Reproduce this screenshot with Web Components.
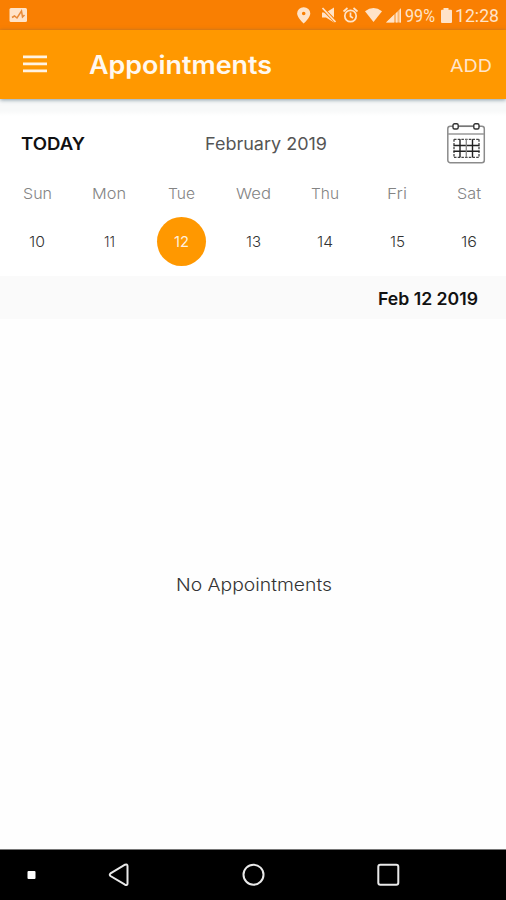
<!DOCTYPE html>
<html lang="en">
<head>
<meta charset="utf-8">
<title>Appointments</title>
<style>
html, body { margin: 0; height: 100%; }
body { font-family: Inter, "Open Sans", sans-serif; background: #fefefe; }
</style>
</head>
<body>
<appointments-screen></appointments-screen>
<script>
const define = (name, html, setup) => {
  const tpl = document.createElement('template');
  tpl.innerHTML = html;
  customElements.define(name, class extends HTMLElement {
    constructor() {
      super();
      this.attachShadow({ mode: 'open' }).appendChild(tpl.content.cloneNode(true));
    }
    connectedCallback() { if (setup) setup(this, this.shadowRoot); }
  });
};

/* One line of text whose letters widen to the given width. */
define('wide-text', `
<style>
:host { display: block; flex: none; white-space: nowrap; line-height: 24px; height: 24px; }
span { display: inline-block; transform-origin: 0 50%; }
</style><span><slot></slot></span>`, (el, root) => {
  const span = root.querySelector('span');
  const width = Number(el.getAttribute('width'));
  el.style.width = width + 'px';
  span.style.transform = 'scaleX(' + (width / span.getBoundingClientRect().width) + ')';
});

define('status-bar', `
<style>
:host { display: flex; height: 30px; background: #f97f02; color: #ffe3c8; align-items: center; padding: 0 7px 0 9px; box-sizing: border-box; font-family: Roboto, sans-serif; font-size: 17.5px; }
svg { display: block; flex: none; }
.fill { flex: 1; }
wide-text { margin-top: 1px; }
</style>
<svg width="19" height="30" viewBox="0 0 19 30"><rect x=".5" y="8" width="17.5" height="14" rx="1.5" fill="#ffe3c8"/><path d="M3 17.500l2.500-1.500 2.500 2 4.500-7 1 6 2-2" fill="none" stroke="#e88a38" stroke-width="1.500"/></svg>
<div class="fill"></div>
<svg width="108" height="30" viewBox="295 0 108 30" fill="#ffe3c8">
<path fill-rule="evenodd" d="M303.700 7.200a6.500 6.300 0 0 0-6.600 6.300c0 4 6.600 10 6.600 10s6.600-6 6.600-10a6.500 6.300 0 0 0-6.600-6.300zm0 4.500a1.800 1.800 0 1 1 0 3.600 1.800 1.800 0 0 1 0-3.600z"/>
<path d="M322 12.500h4l8-5v15l-8-5h-4z"/>
<path d="M322 8l14 14" stroke="#f97f02" stroke-width="3.200"/><path d="M322.500 8L335.500 22" stroke="#ffe3c8" stroke-width="1.700"/>
<g fill="none" stroke="#ffe3c8" stroke-width="1.700"><circle cx="350.500" cy="16" r="5.700"/><path d="M350.500 12.500v4l2.500 1.500M343.500 11.500l4-3.500M357.500 11.500l-4-3.500"/></g>
<path d="M365 11.200q8.500-6.500 17 0L373.500 22z"/>
<path d="M386 22.500L401 8v14.500z" opacity=".55"/><path d="M386 22.500l8-7.700v7.700zM396 13v9.500h1.500V12zM399.500 10v12.500h1.500V8.500z"/>
</svg>
<wide-text width="30" style="margin-left:2px">99%</wide-text>
<svg width="13" height="30" viewBox="0 0 13 30" style="margin:0 2px 0 5px"><path d="M3.500 8h5v1.800H11a1 1 0 0 1 1 1V22a1 1 0 0 1-1 1H2a1 1 0 0 1-1-1V10.800a1 1 0 0 1 1-1h1.500z" fill="#ffe3c8"/></svg>
<wide-text width="44">12:28</wide-text>`);

define('app-bar', `
<style>
:host { display: flex; position: relative; height: 68.500px; background: #ff9800; color: #fff8ef; align-items: center; padding: 0 14px 0 23px; box-sizing: border-box; box-shadow: 0 1px 4px rgba(60,90,110,.6); }
svg { display: block; margin-right: 42px; }
.title { font-size: 25px; font-weight: 600; margin-top: 1px; }
.add { font-size: 17.500px; color: #ffe5cb; margin-left: auto; margin-top: 3px; }
</style>
<svg width="24" height="18" viewBox="0 0 24 18"><path d="M0 1.800h24M0 8.800h24M0 15.800h24" stroke="#fff3e2" stroke-width="2.700"/></svg>
<wide-text class="title" width="183">Appointments</wide-text>
<wide-text class="add" width="42">ADD</wide-text>`);

define('calendar-icon', `
<style>:host { display: block; } svg { display: block; }</style>
<svg width="40" height="42" viewBox="0 0.7 40 42" fill="none">
<rect x="1.800" y="4" width="36.500" height="36.500" rx="2.500" stroke="#8b8b8b" stroke-width="1.500"/>
<path d="M2 11.700h36" stroke="#999" stroke-width="1.500"/>
<path d="M13 4h15" stroke="#777" stroke-width="1.500"/>
<rect x="7" y="1.500" width="5.200" height="5.200" rx="1.500" fill="#fff" stroke="#333" stroke-width="1.400"/>
<rect x="27.800" y="1.500" width="5.200" height="5.200" rx="1.500" fill="#fff" stroke="#333" stroke-width="1.400"/>
<path d="M8 17h25M8 35h25M8 17v18M33 17v18" stroke="#444" stroke-width="1.300" stroke-dasharray="2.500 1.200"/>
<path d="M14 17v18M26.500 17v18M7.500 23.200h26M7.500 29h26" stroke="#222" stroke-width="1.400"/><path d="M20.300 17v18" stroke="#888" stroke-width="1.300"/>
</svg>`);

define('week-day', `
<style>
:host { display: flex; flex-direction: column; align-items: center; }
.name { font-size: 15px; font-weight: 300; color: #848484; }
.num { display: grid; place-items: center; width: 49px; height: 49px; border-radius: 50%; margin-top: 11px; font-size: 14.500px; font-weight: 300; color: #333; }
:host([selected]) .num { background: #ff9800; color: #fff0df; font-weight: 400; }
</style>
<slot name="name" class="name"></slot><div class="num"><slot></slot></div>`, (el, root) => {
  const label = (text, width) => {
    const t = document.createElement('wide-text');
    t.setAttribute('width', width);
    t.textContent = text;
    return t;
  };
  const name = label(el.getAttribute('name'), el.getAttribute('name-width'));
  name.className = 'name';
  root.querySelector('.name').replaceWith(name);
  root.querySelector('.num').replaceChildren(label(el.getAttribute('date'), el.getAttribute('date-width')));
});

define('week-calendar', `
<style>
:host { display: block; box-sizing: border-box; height: 160px; background: #fff; }
header { display: grid; grid-template-columns: 184px 1fr auto; align-items: center; height: 56px; padding: 0 20px 0 21px; font-size: 17.300px; }
.today { font-weight: 600; color: #111; }
.month { color: #555; }
.days { display: grid; grid-template-columns: repeat(7, 72px); padding: 10px 1px 0; }
</style>
<header><wide-text class="today" width="64">TODAY</wide-text><wide-text class="month" width="122">February 2019</wide-text><calendar-icon></calendar-icon></header>
<div class="days"></div>`, (el, root) => {
  const days = [['Sun',29,10,16],['Mon',34,11,11],['Tue',27,12,15],['Wed',35,13,15],['Thu',28,14,16],['Fri',20,15,15],['Sat',24,16,16]];
  root.querySelector('.days').innerHTML = days.map(([n, nw, d, dw]) =>
    `<week-day name="${n}" name-width="${nw}" date="${d}" date-width="${dw}"${d === 12 ? ' selected' : ''}></week-day>`).join('');
});

define('day-heading', `
<style>:host { display: flex; justify-content: flex-end; align-items: center; height: 43px; padding: 2px 28px 0 0; box-sizing: border-box; background: #fafafa; font-size: 17.300px; font-weight: 600; color: #111; }</style>
<wide-text width="100">Feb 12 2019</wide-text>`);

define('empty-state', `
<style>:host { display: grid; place-items: center; font-size: 17.300px; color: #333; font-weight: 300; padding: 1px 0 0 1px; }</style>
<wide-text width="156"><slot></slot></wide-text>`);

define('nav-bar', `
<style>
:host { display: block; height: 51px; background: #000; border-top: 1px solid #777; box-sizing: border-box; }
svg { display: block; }
</style>
<svg width="506" height="50" viewBox="0 850 506 50" fill="none" stroke="#e9e9e9" stroke-width="2">
<rect x="27.500" y="871" width="8" height="8" rx="1" fill="#fff" stroke="none"/>
<path d="M110.500 873.400L125 864.700q2.500-1 2.500 1.300v17.400q0 2.300-2.500 1.300l-14.500-8.700q-1.500-1.300 0-2.600z"/>
<circle cx="253.500" cy="874.700" r="10"/>
<rect x="378.300" y="864.700" width="20" height="20" rx="2"/>
</svg>`);

define('appointments-screen', `
<style>
:host { display: flex; flex-direction: column; width: 506px; height: 900px; overflow: hidden; }
.gap { height: 17.500px; background: linear-gradient(#f8f9f9 70%, #fff); }
empty-state { flex: 1; }
</style>
<status-bar></status-bar>
<app-bar></app-bar>
<div class="gap"></div>
<week-calendar></week-calendar>
<day-heading></day-heading>
<empty-state>No Appointments</empty-state>
<nav-bar></nav-bar>`);
</script>
</body>
</html>
